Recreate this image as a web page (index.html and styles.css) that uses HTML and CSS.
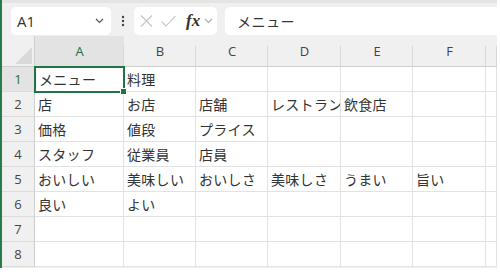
FILE: index.html
```html
<!DOCTYPE html>
<html lang="ja">
<head>
    <meta charset="UTF-8">
    <title>Sheet</title>
    <link rel="stylesheet" href="styles.css">
</head>
<body>
    <div class="sheet">
        <div class="toolbar">
            <div class="namebox">
                <span>A1</span>
                <svg class="chev" width="9" height="6" viewBox="0 0 9 6"><path d="M1 1l3.5 3.5L8 1" fill="none" stroke="#555" stroke-width="1.2"/></svg>
            </div>
            <div class="grip">
                <svg width="4" height="12" viewBox="0 0 4 12"><circle cx="2" cy="2" r="1.2" fill="#444"/><circle cx="2" cy="6" r="1.2" fill="#444"/><circle cx="2" cy="10" r="1.2" fill="#444"/></svg>
            </div>
            <div class="fxbox">
                <svg width="13" height="12" viewBox="0 0 13 12"><path d="M1 0.5l11 11M12 0.5l-11 11" stroke="#c4c4c4" stroke-width="1.1"/></svg>
                <svg width="15" height="12" viewBox="0 0 15 12"><path d="M0.5 6.5l4.5 4.5L14.5 0.8" fill="none" stroke="#c4c4c4" stroke-width="1.1"/></svg>
                <span class="fx">fx</span>
                <svg class="chev" width="9" height="6" viewBox="0 0 9 6"><path d="M1 1l3.5 3.5L8 1" fill="none" stroke="#aaa" stroke-width="1.1"/></svg>
            </div>
            <div class="formula">メニュー</div>
        </div>

        <div class="grid">
            <div class="corner"><span class="tri"></span></div>
            <div class="colhead selected">A</div>
            <div class="colhead">B</div>
            <div class="colhead">C</div>
            <div class="colhead">D</div>
            <div class="colhead">E</div>
            <div class="colhead">F</div>
            <div class="colhead"></div>

            <div class="rowhead selected">1</div>
            <div class="cell active">メニュー</div>
            <div class="cell">料理</div>
            <div class="cell"></div><div class="cell"></div><div class="cell"></div><div class="cell"></div><div class="cell"></div>

            <div class="rowhead">2</div>
            <div class="cell">店</div>
            <div class="cell">お店</div>
            <div class="cell">店舗</div>
            <div class="cell">レストラン</div>
            <div class="cell">飲食店</div>
            <div class="cell"></div><div class="cell"></div>

            <div class="rowhead">3</div>
            <div class="cell">価格</div>
            <div class="cell">値段</div>
            <div class="cell">プライス</div>
            <div class="cell"></div><div class="cell"></div><div class="cell"></div><div class="cell"></div>

            <div class="rowhead">4</div>
            <div class="cell">スタッフ</div>
            <div class="cell">従業員</div>
            <div class="cell">店員</div>
            <div class="cell"></div><div class="cell"></div><div class="cell"></div><div class="cell"></div>

            <div class="rowhead">5</div>
            <div class="cell">おいしい</div>
            <div class="cell">美味しい</div>
            <div class="cell">おいしさ</div>
            <div class="cell">美味しさ</div>
            <div class="cell">うまい</div>
            <div class="cell">旨い</div>
            <div class="cell"></div>

            <div class="rowhead">6</div>
            <div class="cell">良い</div>
            <div class="cell">よい</div>
            <div class="cell"></div><div class="cell"></div><div class="cell"></div><div class="cell"></div><div class="cell"></div>

            <div class="rowhead">7</div>
            <div class="cell"></div><div class="cell"></div><div class="cell"></div><div class="cell"></div><div class="cell"></div><div class="cell"></div><div class="cell"></div>

            <div class="rowhead">8</div>
            <div class="cell"></div><div class="cell"></div><div class="cell"></div><div class="cell"></div><div class="cell"></div><div class="cell"></div><div class="cell"></div>
        </div>
    </div>
</body>
</html>
```

FILE: styles.css
```css
body {
    margin: 0;
    background-color: #fff;
    font-family: "Noto Sans CJK JP", sans-serif;
}

.sheet {
    width: 497px;
    height: 268px;
    box-sizing: border-box;
    border-left: 2px solid #2b7a4b;
    background-color: #f0f0f0;
    overflow: hidden;
}

/* formula bar */
.toolbar {
    height: 36px;
    box-sizing: border-box;
    padding: 4px 0 1px 9px;
    display: flex;
    border-top: 3px solid #e4e4e4;
    margin-right: -3px;
}

.namebox {
    width: 100px;
    background-color: #fff;
    border-radius: 5px;
    display: flex;
    align-items: center;
    justify-content: space-between;
    padding: 0 7px 0 6px;
    box-sizing: border-box;
    font-family: "Open Sans", sans-serif;
    font-size: 15px;
    color: #333;
}

.grip {
    width: 23px;
    display: flex;
    align-items: center;
    justify-content: center;
}

.fxbox {
    width: 83px;
    background-color: #fff;
    border-radius: 5px;
    display: flex;
    align-items: center;
    padding-left: 6px;
    box-sizing: border-box;
    gap: 8px;
}

.fx {
    font-family: "Liberation Serif", serif;
    font-style: italic;
    font-weight: bold;
    font-size: 17px;
    color: #333;
    margin-left: 2px;
    margin-right: -4px;
}

.formula {
    flex: 1;
    margin-left: 8px;
    background-color: #fff;
    border-radius: 5px 0 0 5px;
    padding-left: 12px;
    font-size: 14px;
    line-height: 28px;
    color: #333;
    letter-spacing: 0.5px;
}

/* cells */
.grid {
    display: grid;
    grid-template-columns: 33px 89px 72px 72px 73px 72px 73px 11px;
    grid-template-rows: 31px repeat(8, 25px);
}

.corner {
    position: relative;
    border-right: 1px solid #cfcfcf;
    border-bottom: 1px solid #cfcfcf;
}

.tri {
    position: absolute;
    right: 2px;
    bottom: 2px;
    width: 0;
    height: 0;
    border-left: 17px solid transparent;
    border-bottom: 17px solid #d9d9d9;
}

.colhead {
    font-family: "Open Sans", sans-serif;
    font-size: 13px;
    color: #444;
    text-align: center;
    line-height: 31px;
    border-bottom: 1px solid #cfcfcf;
    background: linear-gradient(#d8d8d8, #d8d8d8) right bottom / 1px 20px no-repeat;
}

.rowhead {
    font-family: "Open Sans", sans-serif;
    font-size: 13px;
    color: #444;
    text-align: center;
    line-height: 24px;
    border-right: 1px solid #cfcfcf;
    border-bottom: 1px solid #dcdcdc;
}

.selected {
    background-color: #e3e3e3;
    color: #1d6d40;
}

.cell {
    background-color: #fff;
    border-right: 1px solid #e2e2e2;
    border-bottom: 1px solid #e2e2e2;
    font-size: 14px;
    line-height: 24px;
    color: #333;
    padding-left: 3px;
    white-space: nowrap;
    overflow: hidden;
    letter-spacing: 0.3px;
}

.active {
    position: relative;
    overflow: visible;
    outline: 2px solid #217346;
    outline-offset: -1px;
    padding-left: 4px;
}

.active::after {
    content: "";
    position: absolute;
    right: -4px;
    bottom: -4px;
    width: 5px;
    height: 5px;
    background-color: #217346;
    border: 1px solid #fff;
    z-index: 2;
}
```
